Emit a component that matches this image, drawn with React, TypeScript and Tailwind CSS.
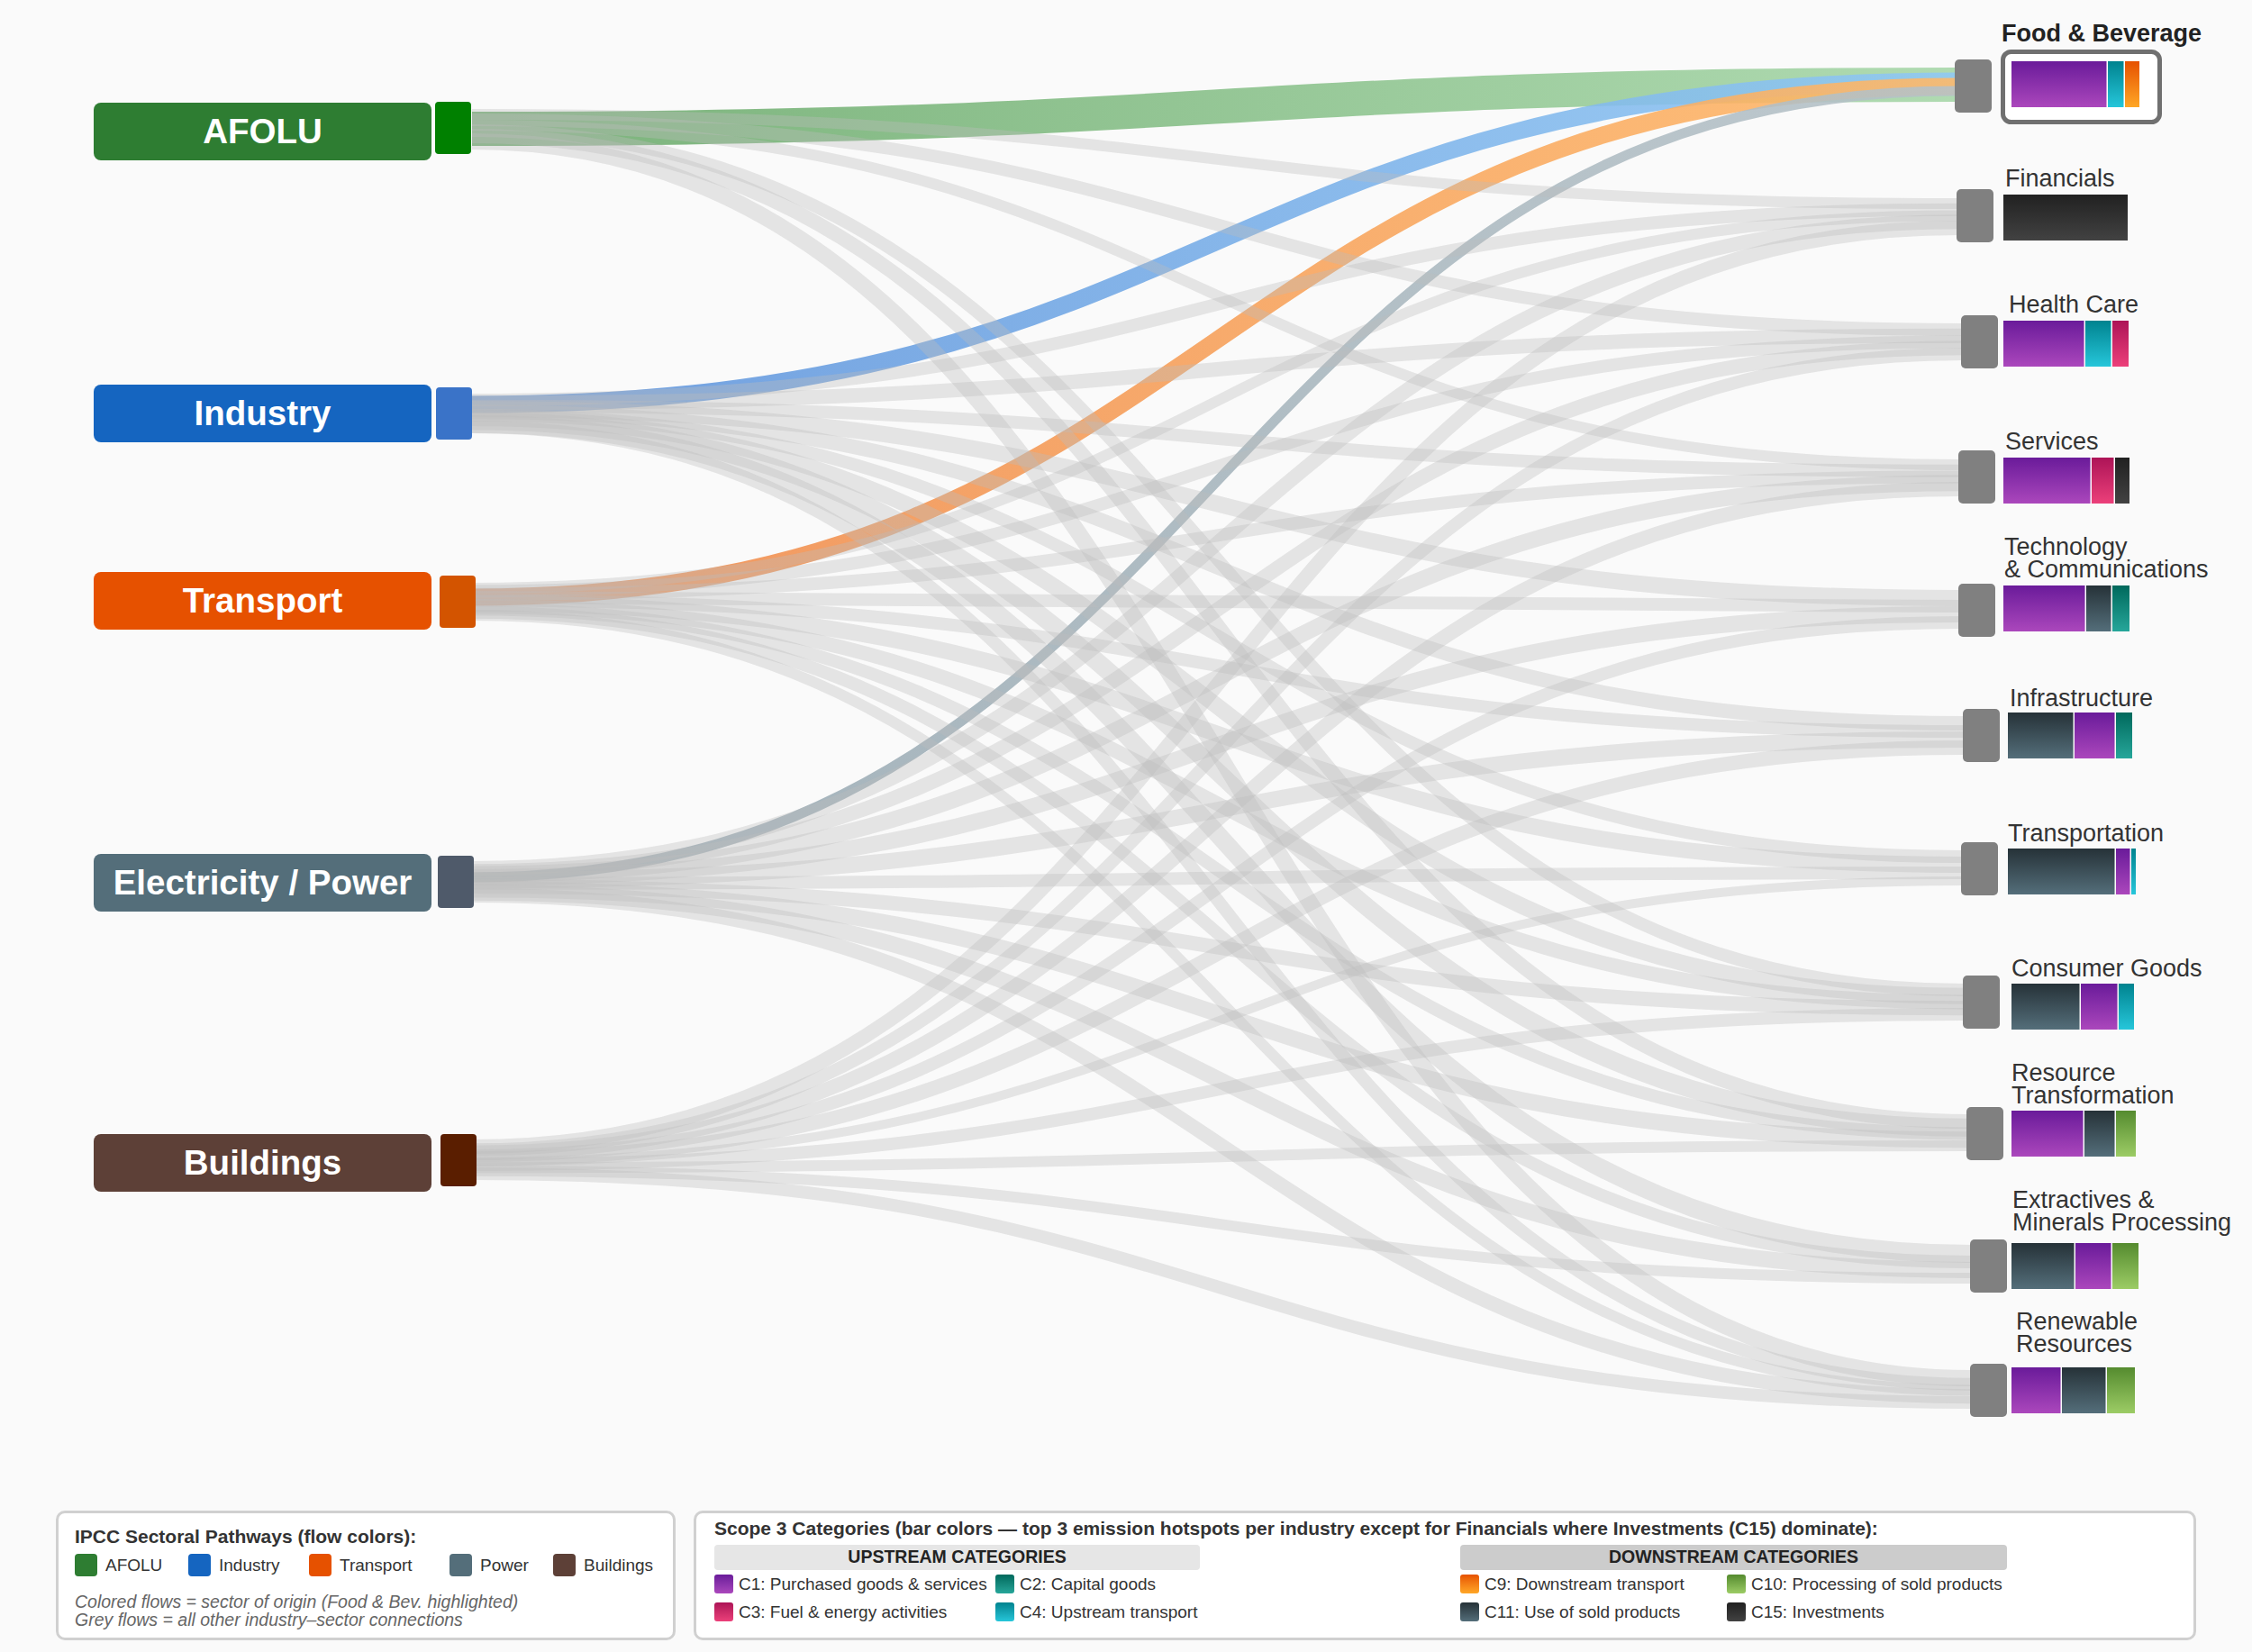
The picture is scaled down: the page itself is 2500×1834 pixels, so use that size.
import React from 'react'

// Scope 3 category colours (top -> bottom gradient)
const CAT: Record<string, [string, string]> = {
  c1: ['#6a1b9a', '#ab47bc'],
  c2: ['#00695c', '#26a69a'],
  c3: ['#ad1457', '#ec407a'],
  c4: ['#00838f', '#26c6da'],
  c9: ['#e65100', '#ffa726'],
  c10: ['#558b2f', '#9ccc65'],
  c11: ['#263238', '#546e7a'],
  c15: ['#212121', '#424242'],
}

const SOURCES = [
  { name: 'AFOLU', box: 'bg-[#2e7d32]', node: '#008000', boxY: 114, nx: 483, ny: 113 },
  { name: 'Industry', box: 'bg-[#1565c0]', node: '#3a73c8', boxY: 427, nx: 484, ny: 430 },
  { name: 'Transport', box: 'bg-[#e65100]', node: '#d35400', boxY: 635, nx: 488, ny: 639 },
  { name: 'Electricity / Power', box: 'bg-[#546e7a]', node: '#4f5a6a', boxY: 948, nx: 486, ny: 950 },
  { name: 'Buildings', box: 'bg-[#5d4037]', node: '#5a1e00', boxY: 1259, nx: 489, ny: 1259 },
]

type Target = {
  label: string[]
  bold?: boolean
  lx: number
  ly: number
  nx: number
  ny: number
  bx: number
  by: number
  segs: [string, number][]
}

const TARGETS: Target[] = [
  { label: ['Food & Beverage'], bold: true, lx: 2222, ly: 46, nx: 2170, ny: 66, bx: 2233, by: 68, segs: [['c1', 107], ['c4', 19], ['c9', 16]] },
  { label: ['Financials'], lx: 2226, ly: 207, nx: 2172, ny: 210, bx: 2224, by: 216, segs: [['c15', 138]] },
  { label: ['Health Care'], lx: 2230, ly: 347, nx: 2177, ny: 350, bx: 2224, by: 356, segs: [['c1', 91], ['c4', 30], ['c3', 18]] },
  { label: ['Services'], lx: 2226, ly: 499, nx: 2174, ny: 500, bx: 2224, by: 508, segs: [['c1', 98], ['c3', 26], ['c15', 16]] },
  { label: ['Technology', '& Communications'], lx: 2225, ly: 616, nx: 2174, ny: 648, bx: 2224, by: 650, segs: [['c1', 92], ['c11', 29], ['c2', 19]] },
  { label: ['Infrastructure'], lx: 2231, ly: 784, nx: 2179, ny: 787, bx: 2229, by: 791, segs: [['c11', 74], ['c1', 46], ['c2', 18]] },
  { label: ['Transportation'], lx: 2229, ly: 934, nx: 2177, ny: 935, bx: 2229, by: 942, segs: [['c11', 120], ['c1', 17], ['c4', 5]] },
  { label: ['Consumer Goods'], lx: 2233, ly: 1084, nx: 2179, ny: 1083, bx: 2233, by: 1092, segs: [['c11', 77], ['c1', 42], ['c4', 17]] },
  { label: ['Resource', 'Transformation'], lx: 2233, ly: 1200, nx: 2183, ny: 1229, bx: 2233, by: 1233, segs: [['c1', 81], ['c11', 35], ['c10', 22]] },
  { label: ['Extractives &', 'Minerals Processing'], lx: 2234, ly: 1341, nx: 2187, ny: 1376, bx: 2233, by: 1380, segs: [['c11', 71], ['c1', 41], ['c10', 29]] },
  { label: ['Renewable', 'Resources'], lx: 2238, ly: 1476, nx: 2187, ny: 1514, bx: 2233, by: 1518, segs: [['c1', 56], ['c11', 50], ['c10', 31]] },
]

// grey link widths: rows = sources, cols = targets 1..10 (Financials..Renewable)
const GREY = [
  [12, 14, 12, 0, 0, 0, 14, 16, 0, 18],
  [14, 16, 14, 18, 16, 14, 18, 20, 20, 14],
  [12, 14, 14, 14, 14, 18, 16, 14, 14, 12],
  [16, 16, 18, 18, 18, 14, 16, 18, 18, 16],
  [16, 14, 16, 14, 16, 10, 14, 12, 12, 14],
]

// highlighted links into Food & Beverage
const FOOD = [
  { w: 38, a: '#68a868', b: '#a5d6a7', y0: 143, y1: 94 },
  { w: 19, a: '#5b90da', b: '#90c8f4', y0: 449, y1: 90 },
  { w: 19, a: '#ee8548', b: '#ffb968', y0: 663, y1: 96 },
  { w: 11, a: '#94a6b0', b: '#b6c2c8', y0: 974, y1: 101 },
]

const NODE_H = 58
const X0 = 524

function spread(n: number, i: number, top: number, h: number, pad: number) {
  if (n === 1) return top + h / 2
  return top + pad + ((h - 2 * pad) * i) / (n - 1)
}

function link(x0: number, y0: number, x1: number, y1: number) {
  const xm = (x0 + x1) / 2
  return `M${x0},${y0} C${xm},${y0} ${xm},${y1} ${x1},${y1}`
}

type Link = { s: number; t: number; w: number; y0: number; y1: number }

function buildLinks() {
  const links: Link[] = []
  SOURCES.forEach((src, s) => {
    const row = GREY[s].map((w, i) => ({ t: i + 1, w })).filter((l) => l.w > 0)
    row.forEach((l, i) => {
      links.push({ s, t: l.t, w: l.w, y0: spread(row.length, i, src.ny, NODE_H, 14), y1: 0 })
    })
  })
  for (let t = 1; t < TARGETS.length; t++) {
    const inc = links.filter((l) => l.t === t)
    inc.forEach((l, i) => {
      l.y1 = spread(inc.length, i, TARGETS[t].ny, 59, 16)
    })
  }
  return links
}

const LINKS = buildLinks()

function Chart() {
  return (
    <svg width={2500} height={1677} className="absolute left-0 top-0">
      <defs>
        {Object.entries(CAT).map(([k, [a, b]]) => (
          <linearGradient key={k} id={`cat-${k}`} x1="0" y1="0" x2="0" y2="1">
            <stop offset="0" stopColor={a} />
            <stop offset="1" stopColor={b} />
          </linearGradient>
        ))}
        {FOOD.map((f, i) => (
          <linearGradient key={i} id={`food-${i}`} gradientUnits="userSpaceOnUse" x1={X0} y1="0" x2={2172} y2="0">
            <stop offset="0" stopColor={f.a} />
            <stop offset="1" stopColor={f.b} />
          </linearGradient>
        ))}
      </defs>

      {/* Food & Beverage links (under the grey ones, as in the original) */}
      {FOOD.map((f, i) => (
        <path
          key={i}
          d={link(X0, f.y0, TARGETS[0].nx + 2, f.y1)}
          fill="none"
          stroke={`url(#food-${i})`}
          strokeOpacity={0.88}
          strokeWidth={f.w}
        />
      ))}

      {/* grey links */}
      {LINKS.map((l, i) => (
        <path
          key={i}
          d={link(X0, l.y0, TARGETS[l.t].nx + 2, l.y1)}
          fill="none"
          stroke="#bdbdbd"
          strokeOpacity={0.36}
          strokeWidth={l.w}
        />
      ))}

      {/* source nodes */}
      {SOURCES.map((s) => (
        <rect key={s.name} x={s.nx} y={s.ny} width={40} height={NODE_H} rx={4} fill={s.node} />
      ))}

      {/* highlight around food bar */}
      <rect x={2223.5} y={57.5} width={174} height={78} rx={9} fill="#ffffff" stroke="#707070" strokeWidth={5} />

      {/* target nodes + bars + labels */}
      {TARGETS.map((t) => {
        let x = t.bx
        return (
          <g key={t.label.join(' ')}>
            <rect x={t.nx} y={t.ny} width={41} height={59} rx={5} fill="#808080" />
            {t.segs.map(([c, w], i) => {
              const last = i === t.segs.length - 1
              const r = <rect key={i} x={x} y={t.by} width={last ? w : w - 1.5} height={51} fill={`url(#cat-${c})`} />
              x += w
              return r
            })}
            <text
              x={t.lx}
              y={t.ly}
              fontFamily="'Liberation Sans', Arial, sans-serif"
              fontSize={27}
              fontWeight={t.bold ? 700 : 400}
              fill={t.bold ? '#222222' : '#333333'}
            >
              {t.label.map((line, i) => (
                <tspan key={i} x={t.lx} dy={i === 0 ? 0 : 25}>
                  {line}
                </tspan>
              ))}
            </text>
          </g>
        )
      })}
    </svg>
  )
}

const SECTORS = [
  { name: 'AFOLU', sw: 'bg-[#2e7d32]', w: 'w-[126px]' },
  { name: 'Industry', sw: 'bg-[#1565c0]', w: 'w-[134px]' },
  { name: 'Transport', sw: 'bg-[#e65100]', w: 'w-[156px]' },
  { name: 'Power', sw: 'bg-[#546e7a]', w: 'w-[115px]' },
  { name: 'Buildings', sw: 'bg-[#5d4037]', w: '' },
]

const UP = [
  { label: 'C1: Purchased goods & services', sw: 'from-[#6a1b9a] to-[#ab47bc]' },
  { label: 'C2: Capital goods', sw: 'from-[#00695c] to-[#26a69a]' },
  { label: 'C3: Fuel & energy activities', sw: 'from-[#ad1457] to-[#ec407a]' },
  { label: 'C4: Upstream transport', sw: 'from-[#00838f] to-[#26c6da]' },
]

const DOWN = [
  { label: 'C9: Downstream transport', sw: 'from-[#e65100] to-[#ffa726]' },
  { label: 'C10: Processing of sold products', sw: 'from-[#558b2f] to-[#9ccc65]' },
  { label: 'C11: Use of sold products', sw: 'from-[#263238] to-[#546e7a]' },
  { label: 'C15: Investments', sw: 'from-[#212121] to-[#424242]' },
]

function CatItem({ label, sw }: { label: string; sw: string }) {
  return (
    <div className="flex h-[21px] items-center">
      <div className={`h-[21px] w-[21px] rounded-[3px] bg-linear-to-b ${sw}`} />
      <span className="ml-[6px] whitespace-nowrap text-[19px] leading-[21px] text-[#333333]">{label}</span>
    </div>
  )
}

export default function App() {
  return (
    <div className="h-[1834px] w-[2500px] overflow-hidden bg-[#fafafa] font-['Liberation_Sans',Arial,sans-serif]">
      {/* Sankey canvas */}
      <div className="relative h-[1677px] w-full">
        <Chart />
        {SOURCES.map((s) => (
          <div
            key={s.name}
            className={`absolute left-[104px] flex h-[64px] w-[375px] items-center justify-center rounded-[8px] ${s.box}`}
            style={{ top: s.boxY }}
          >
            <span className="text-[38.5px] font-bold leading-none text-white">{s.name}</span>
          </div>
        ))}
      </div>

      {/* Legends */}
      <div className="flex gap-[20px] pl-[62px]">
        <div className="h-[144px] w-[688px] rounded-[10px] border-[3px] border-[#d0d0d0] bg-white px-[18px] pt-[15px]">
          <div className="text-[21px] font-bold leading-[22px] text-[#333333]">IPCC Sectoral Pathways (flow colors):</div>
          <div className="mt-[8px] flex h-[25px] items-center">
            {SECTORS.map((s) => (
              <div key={s.name} className={`flex items-center ${s.w}`}>
                <div className={`h-[25px] w-[25px] rounded-[4px] ${s.sw}`} />
                <span className="ml-[9px] text-[19px] leading-[25px] text-[#333333]">{s.name}</span>
              </div>
            ))}
          </div>
          <div className="mt-[18px] text-[19.5px] italic leading-[20px] text-[#666666]">
            <div>Colored flows = sector of origin (Food &amp; Bev. highlighted)</div>
            <div>Grey flows = all other industry–sector connections</div>
          </div>
        </div>

        <div className="h-[144px] w-[1668px] rounded-[10px] border-[3px] border-[#d0d0d0] bg-white px-[20px] pt-[6px]">
          <div className="whitespace-nowrap text-[21px] font-bold leading-[22px] text-[#333333]">
            Scope 3 Categories (bar colors — top 3 emission hotspots per industry except for Financials where Investments (C15) dominate):
          </div>
          <div className="mt-[7px] flex">
            <div className="w-[539px]">
              <div className="flex h-[28px] items-center justify-center rounded-[4px] bg-[#e6e6e6] text-[19.5px] font-bold text-[#222222]">
                UPSTREAM CATEGORIES
              </div>
              <div className="mt-[5px] grid grid-cols-[312px_1fr] gap-y-[10px]">
                {UP.map((c) => (
                  <CatItem key={c.label} {...c} />
                ))}
              </div>
            </div>
            <div className="ml-[289px] w-[607px]">
              <div className="flex h-[28px] items-center justify-center rounded-[4px] bg-[#cccccc] text-[19.5px] font-bold text-[#222222]">
                DOWNSTREAM CATEGORIES
              </div>
              <div className="mt-[5px] grid grid-cols-[296px_1fr] gap-y-[10px]">
                {DOWN.map((c) => (
                  <CatItem key={c.label} {...c} />
                ))}
              </div>
            </div>
          </div>
        </div>
      </div>
    </div>
  )
}
